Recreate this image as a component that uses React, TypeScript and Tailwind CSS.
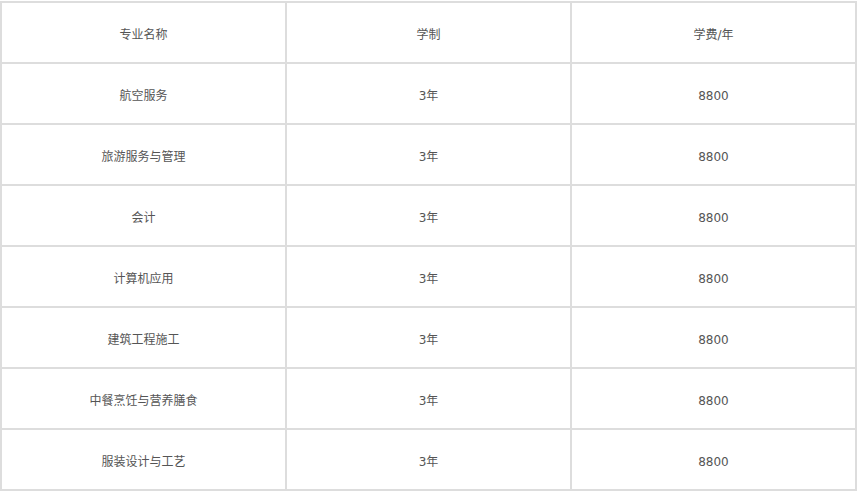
const rows = [
  ['航空服务', '3年', '8800'],
  ['旅游服务与管理', '3年', '8800'],
  ['会计', '3年', '8800'],
  ['计算机应用', '3年', '8800'],
  ['建筑工程施工', '3年', '8800'],
  ['中餐烹饪与营养膳食', '3年', '8800'],
  ['服装设计与工艺', '3年', '8800'],
];

const cell = 'h-[61px] w-[285px] border-2 border-[#dddddd] p-0 pt-1 text-center align-middle';

export default function App() {
  return (
    <div className="min-h-screen bg-white pt-px font-['DejaVu_Sans','Noto_Sans_CJK_SC',sans-serif] text-[12px] text-[#555555]">
      <table className="w-[856px] table-fixed border-collapse">
        <thead>
          <tr>
            <th className={`${cell} font-normal`}>专业名称</th>
            <th className={`${cell} font-normal`}>学制</th>
            <th className={`${cell} font-normal`}>学费/年</th>
          </tr>
        </thead>
        <tbody>
          {rows.map((r) => (
            <tr key={r[0]}>
              {r.map((v, i) => (
                <td key={i} className={cell}>
                  {v}
                </td>
              ))}
            </tr>
          ))}
        </tbody>
      </table>
    </div>
  );
}
